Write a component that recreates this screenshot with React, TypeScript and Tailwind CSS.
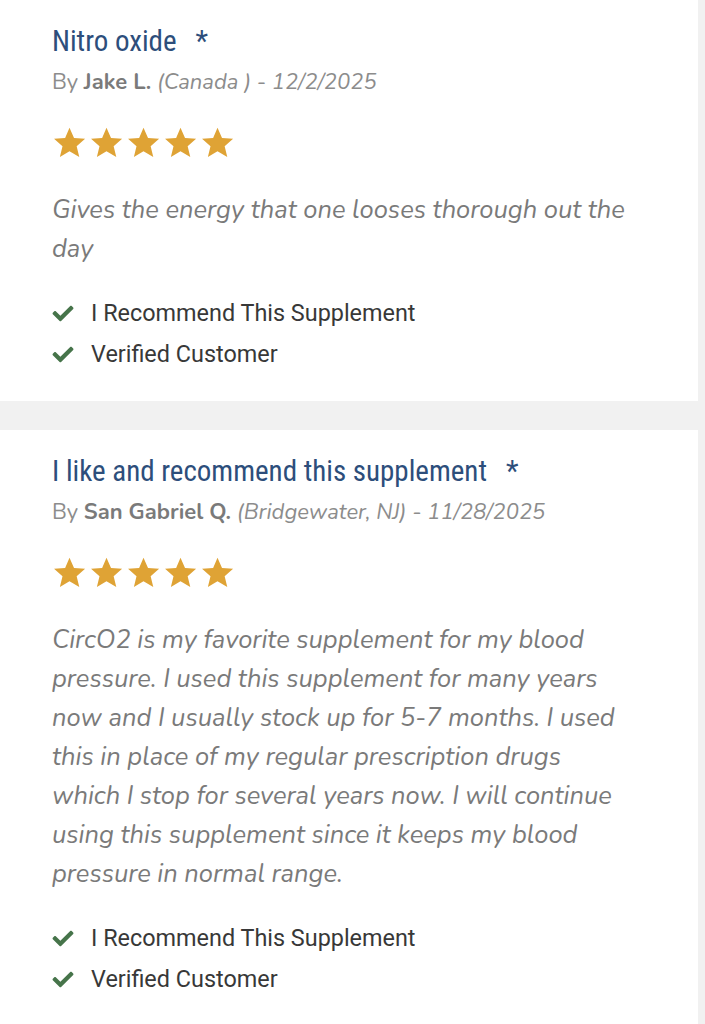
import React from 'react'

interface IReview {
  title: string
  name: string
  place: string
  date: string
  body: string
}

const reviews: IReview[] = [
  {
    title: 'Nitro oxide',
    name: 'Jake L.',
    place: '(Canada )',
    date: '12/2/2025',
    body: 'Gives the energy that one looses thorough out the day',
  },
  {
    title: 'I like and recommend this supplement',
    name: 'San Gabriel Q.',
    place: '(Bridgewater, NJ)',
    date: '11/28/2025',
    body: 'CircO2 is my favorite supplement for my blood pressure. I used this supplement for many years now and I usually stock up for 5-7 months. I used this in place of my regular prescription drugs which I stop for several years now. I will continue using this supplement since it keeps my blood pressure in normal range.',
  },
]

const Star = () => (
  <svg viewBox="0 0 24 24" className="h-[35px] w-[35px] fill-[#dfa335]">
    <path d="M12 1.8l3.1 7.1 7.6.6-5.8 5 1.8 7.5L12 18l-6.6 4 1.8-7.5-5.8-5 7.6-.6z" />
  </svg>
)

// heavy check mark, same shape as the font-awesome one
const Check = () => (
  <svg viewBox="0 0 512 512" className="h-[21px] w-[22px] fill-[#46744a]">
    <path d="M173.9 439.4l-166.4-166.4c-10-10-10-26.2 0-36.2l36.2-36.2c10-10 26.2-10 36.2 0L192 312.7 432.1 72.6c10-10 26.2-10 36.2 0l36.2 36.2c10 10 10 26.2 0 36.2l-294.4 294.4c-10 10-26.2 10-36.2 0z" />
  </svg>
)

const ReviewCard: React.FC<{ review: IReview }> = ({ review }) => {
  return (
    <div className="w-[698px] bg-white pb-[32px] pl-[52px] pr-[68px] pt-[22px]">
      <h3 className="font-['Roboto_Condensed','Liberation_Sans_Narrow','DejaVu_Sans_Condensed',sans-serif] text-[29px] leading-[38px] text-[#2d4e7b]">
        {review.title}
        <span className="ml-[19px]">*</span>
      </h3>
      <p className="mt-[7px] font-['Nunito','Lato',sans-serif] text-[22px] leading-[30px] text-[#8c8c8c]">
        By <span className="font-bold text-[#7a7a7a]">{review.name}</span>{' '}
        <span className="italic">
          {review.place} - {review.date}
        </span>
      </p>
      <div className="mt-[28px] flex gap-[2px]">
        {[0, 1, 2, 3, 4].map((i) => (
          <Star key={i} />
        ))}
      </div>
      <p className="mt-[30px] font-['Nunito','Lato',sans-serif] text-[25.5px] italic leading-[39px] text-[#7a7a7a]">
        {review.body}
      </p>
      <ul className="mt-[30px] flex flex-col gap-[11px] font-['Roboto',sans-serif] text-[23.4px] leading-[30px] text-[#383838]">
        <li className="flex items-center gap-[17px]">
          <Check />I Recommend This Supplement
        </li>
        <li className="flex items-center gap-[17px]">
          <Check />
          Verified Customer
        </li>
      </ul>
    </div>
  )
}

export default function App() {
  return (
    <div className="flex min-h-[1024px] flex-col gap-[29px] bg-[#f1f1f1]">
      {reviews.map((r) => (
        <ReviewCard key={r.title} review={r} />
      ))}
    </div>
  )
}
